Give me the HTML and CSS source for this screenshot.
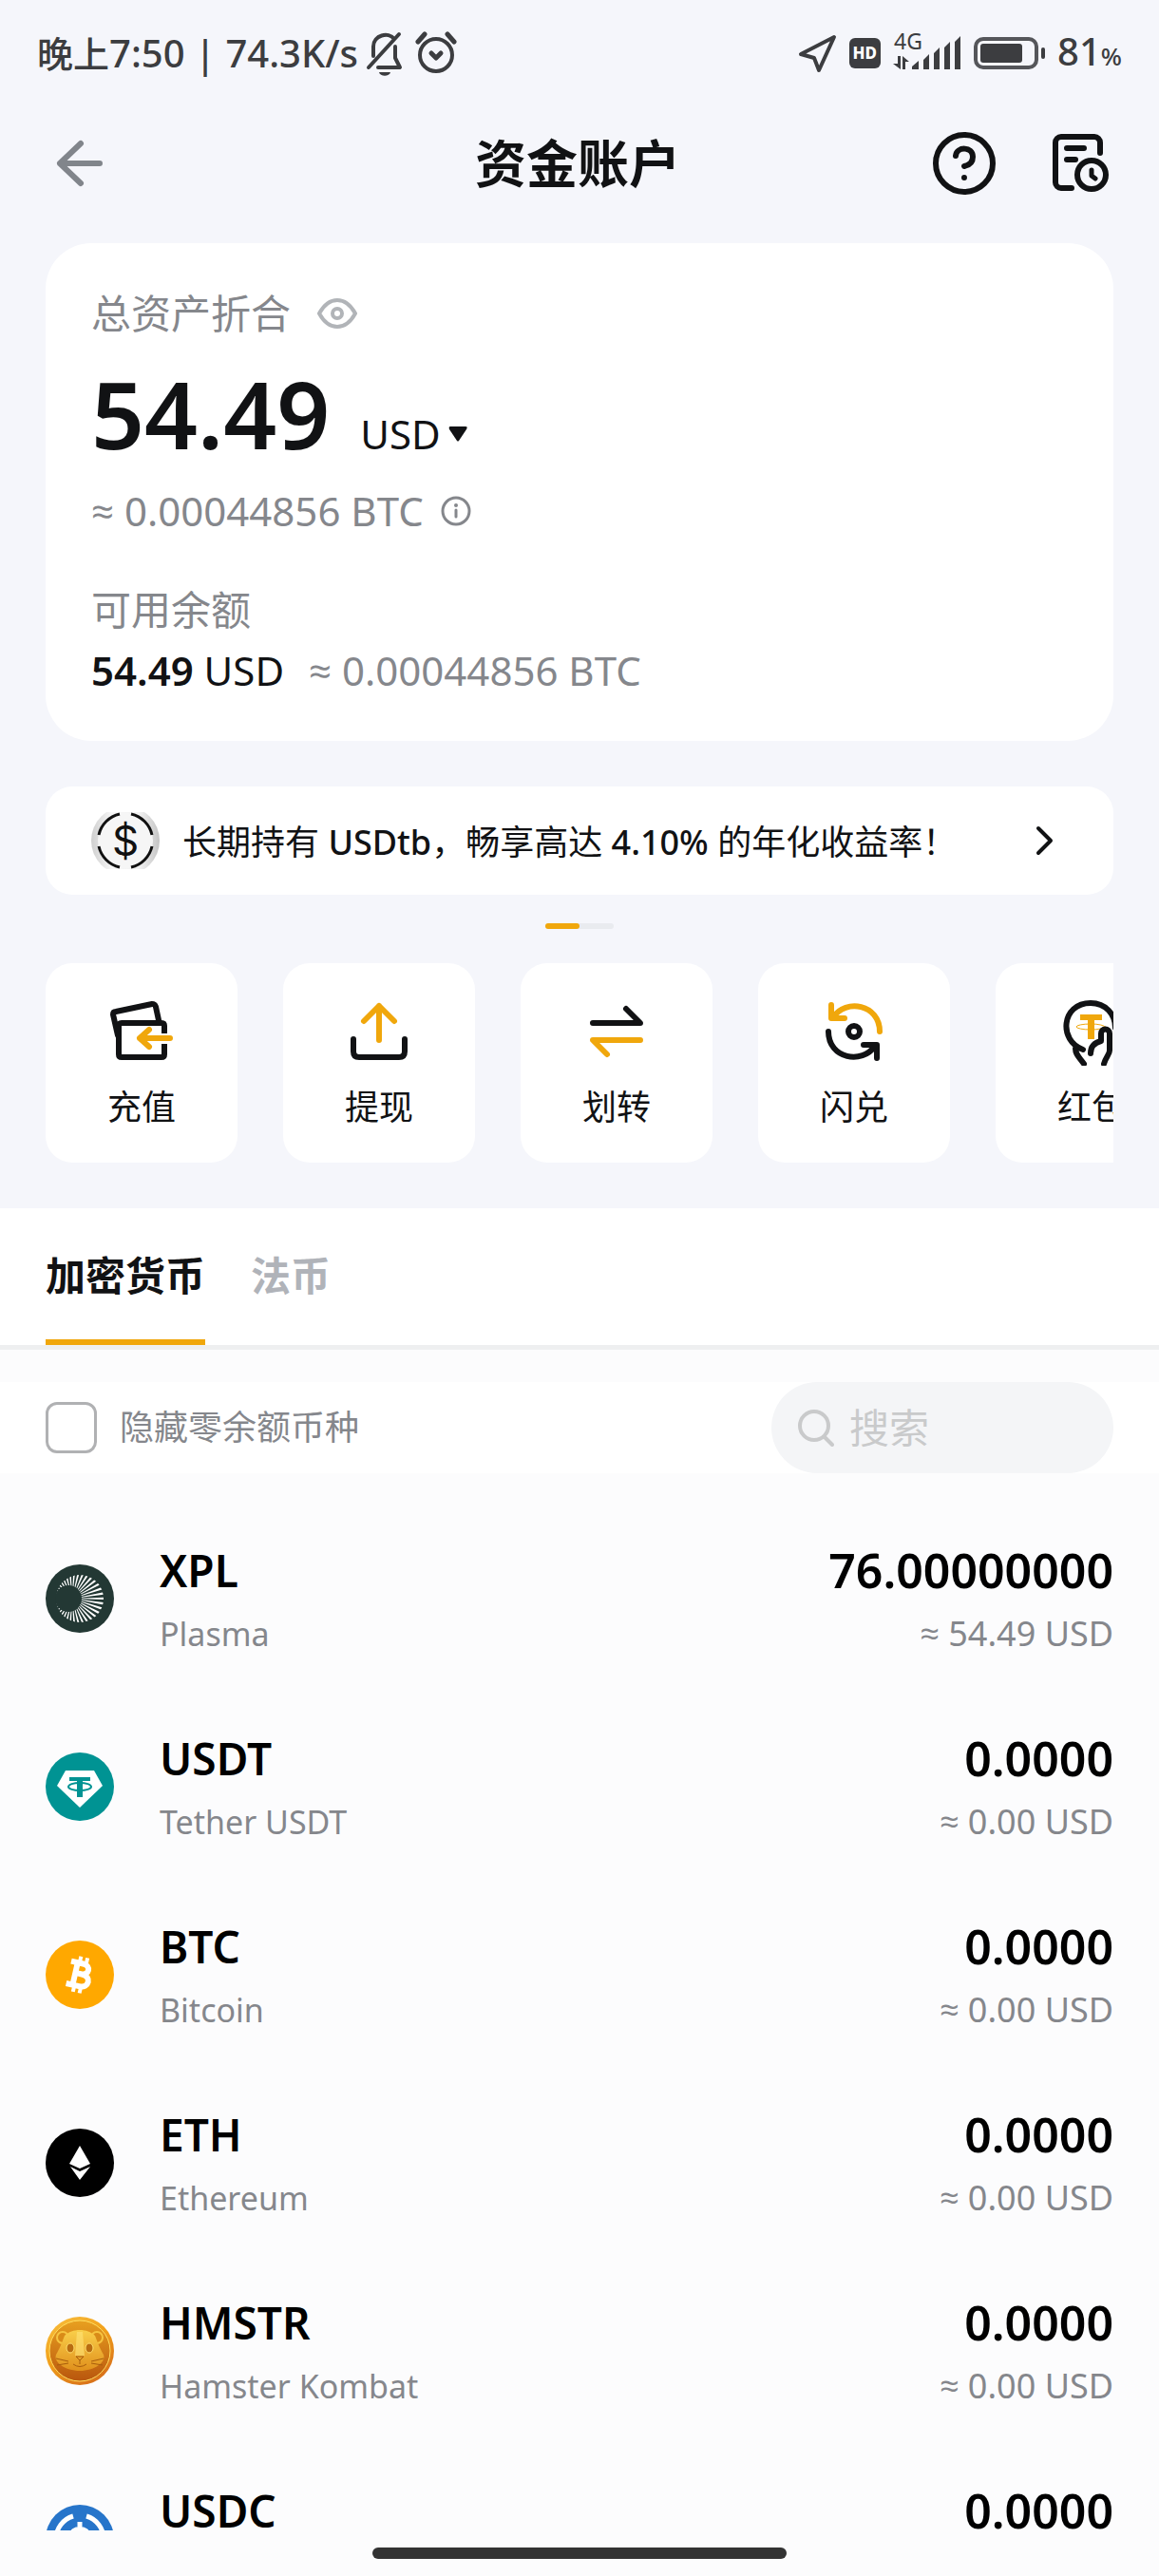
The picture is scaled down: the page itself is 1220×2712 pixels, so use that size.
FILE: index.html
```html
<!DOCTYPE html>
<html lang="zh-CN">
<head>
<meta charset="utf-8">
<meta name="viewport" content="width=device-width, initial-scale=1">
<title>资金账户</title>
<link rel="stylesheet" href="styles.css">
</head>
<body>
<div class="app">
  <div class="status">
    <div class="status-side">
      <span class="status-text"><span class="status-cjk">晚上</span>7:50 | 74.3K/s</span>
      <svg class="status-bell" width="40" height="50" viewBox="0 0 40 50" fill="none" stroke="#3c3d40" stroke-width="4" stroke-linecap="round" stroke-linejoin="round"><path d="M8 28V18C8 6 24 2 30 10M3 40L35 5M31 18v12l5 10H13"/><path d="M14 45h12c-1 5-11 5-12 0z" fill="#3c3d40" stroke="none"/></svg>
      <svg width="44" height="50" viewBox="0 0 44 50" fill="none" stroke="#3c3d40" stroke-width="4" stroke-linecap="round" stroke-linejoin="round"><circle cx="22" cy="27" r="17"/><path d="M3 13l7-8M41 13l-7-8" stroke-width="5"/><path d="M17 25l5 5 5-5" stroke-width="5"/></svg>
    </div>
    <div class="status-side">
      <svg width="42" height="42" viewBox="0 0 42 42" fill="none" stroke="#3c3d40" stroke-width="4" stroke-linejoin="round"><path d="M38 4L3 22l14 4 5 13z"/></svg>
      <span class="status-hd">HD</span>
      <svg class="status-signal" width="74" height="48" viewBox="0 0 74 48" fill="#3c3d40"><text x="2" y="20" font-size="23">4G</text><path d="M6 27h3v14L1 35h5zM11 41V27l7 6h-4v8zM21 41v-3l7-6v9zM33 41V31l6-6v16zM44 41V24l6-6v23zM55 41V18l6-6v29zM66 41V12l6-6v35z"/></svg>
      <svg class="status-battery" width="76" height="34" viewBox="0 0 76 34"><rect x="2" y="2" width="64" height="30" rx="8" fill="none" stroke="#55565a" stroke-width="4"/><rect x="7" y="7" width="44" height="20" rx="3" fill="#3c3d40"/><rect x="71" y="11" width="4" height="12" rx="2" fill="#3c3d40"/></svg>
      <span class="status-text">81<small>%</small></span>
    </div>
  </div>

  <header class="topbar">
    <button class="icon-button" aria-label="返回"><svg width="72" height="66" viewBox="0 0 72 66" fill="none" stroke="#81858b" stroke-width="6" stroke-linecap="round" stroke-linejoin="round"><path d="M57 33H15M37 12L15 33l22 21"/></svg></button>
    <h1>资金账户</h1>
    <div class="topbar-actions">
      <button class="icon-button" aria-label="帮助"><svg width="66" height="66" viewBox="0 0 66 66" fill="none" stroke="#111214" stroke-width="6" stroke-linecap="round"><circle cx="33" cy="33" r="30"/><path d="M24 25C25 15 42 15 42 26c0 6-4 9-9 10"/><circle cx="33" cy="48" r="3" fill="#111214" stroke="none"/></svg></button>
      <button class="icon-button" aria-label="历史记录"><svg width="60" height="62" viewBox="0 0 60 62" fill="none" stroke="#111214" stroke-width="6" stroke-linecap="round" stroke-linejoin="round"><path d="M50 20V9a6 6 0 0 0-6-6H9a6 6 0 0 0-6 6v42a6 6 0 0 0 6 6h11M15 15h18M15 27h9"/><circle cx="41" cy="43" r="15"/><path d="M41 38v6l4 3" stroke-width="5"/></svg></button>
    </div>
  </header>

  <section class="overview">
    <div class="card">
      <div class="card-label">总资产折合
        <button class="icon-button" aria-label="隐藏资产"><svg width="42" height="34" viewBox="0 0 42 34" fill="none" stroke="#b1b4b8" stroke-width="4"><path d="M2 17C7 8 13 3 21 3s14 5 19 14c-5 9-11 14-19 14S7 26 2 17z"/><circle cx="21" cy="17" r="5"/></svg></button>
      </div>
      <div class="total">
        <strong>54.49</strong>
        <button class="currency">USD <svg width="20" height="16" viewBox="0 0 20 16"><path d="M2 0h16c2 0 2 1 1 3l-8 12q-1 1-2 0L1 3Q0 0 2 0z" fill="#111214"/></svg></button>
      </div>
      <div class="approx">≈ 0.00044856 BTC
        <svg width="32" height="32" viewBox="0 0 32 32" fill="none" stroke="#85878c" stroke-width="3" stroke-linecap="round"><circle cx="16" cy="16" r="14"/><path d="M16 15v7"/><circle cx="16" cy="10" r="2" fill="#85878c" stroke="none"/></svg>
      </div>
      <div class="available-label">可用余额</div>
      <div class="available"><span class="available-value"><b>54.49</b> USD</span><span>≈ 0.00044856 BTC</span></div>
    </div>

    <a class="banner" href="#">
      <svg width="72" height="60" viewBox="0 6 72 60"><defs><linearGradient id="silver"><stop stop-color="#cfcfcf"/><stop offset=".3" stop-color="#f7f7f7"/><stop offset=".7" stop-color="#f2f2f2"/><stop offset="1" stop-color="#c4c4c4"/></linearGradient></defs><circle cx="36" cy="36" r="36" fill="url(#silver)"/><circle cx="36" cy="36" r="29" fill="#f6f6f6"/><path d="M42 8a29 29 0 0 1 22 22M64 42a29 29 0 0 1-22 22M30 64A29 29 0 0 1 8 42M8 30A29 29 0 0 1 30 8" fill="none" stroke="#111" stroke-width="3"/><text x="36" y="52" font-size="44" text-anchor="middle" class="coin-text">$</text></svg>
      <span class="banner-text">长期持有 <b>USDtb</b>，畅享高达 <b>4.10%</b> 的年化收益率！</span>
      <svg width="20" height="32" viewBox="0 0 20 32" fill="none" stroke="#111214" stroke-width="4" stroke-linecap="round" stroke-linejoin="round"><path d="M3 3l13 13L3 29"/></svg>
    </a>
    <div class="pager"><i class="on"></i><i></i></div>

    <nav class="tiles">
      <button class="tile"><svg width="72" height="72" viewBox="0 0 72 72" fill="none" stroke="#111214" stroke-width="6" stroke-linecap="round" stroke-linejoin="round"><path d="M11 40L6 18c0-2 1-3 3-3l38-8c2 0 3 0 4 3l3 14"/><path d="M60 38v-8q0-3-3-3H15q-3 0-3 3v30q0 3 3 3h42q3 0 3-3V49" stroke-linecap="butt"/><path d="M66 43H34M44 34l-10 9 10 9" stroke="#f0a70c"/></svg>充值</button>
      <button class="tile"><svg width="72" height="72" viewBox="0 0 72 72" fill="none" stroke="#111214" stroke-width="6" stroke-linecap="round" stroke-linejoin="round"><path d="M9 44v13q0 6 6 6h42q6 0 6-6V44"/><path d="M36 45V9M20 25L36 9l16 16" stroke="#f0a70c"/></svg>提现</button>
      <button class="tile"><svg width="72" height="72" viewBox="0 0 72 72" fill="none" stroke="#111214" stroke-width="6" stroke-linecap="round" stroke-linejoin="round"><path d="M11 27h50L46 12"/><path d="M61 45H11l15 15" stroke="#f0a70c"/></svg>划转</button>
      <button class="tile"><svg width="72" height="72" viewBox="0 0 72 72" fill="none" stroke="#111214" stroke-width="6" stroke-linecap="round" stroke-linejoin="round"><circle cx="36" cy="36" r="6"/><path d="M9 36c0 29 36 35 49 15M46 50h14v14"/><path d="M63 36C63 7 27 1 14 21M26 22H12V8" stroke="#f0a70c"/></svg>闪兑</button>
      <button class="tile"><svg width="72" height="72" viewBox="0 0 72 72" fill="none" stroke="#111214" stroke-width="6" stroke-linecap="round" stroke-linejoin="round"><path d="M27 55C1 46 4 6 35 6c16 0 26 12 26 26M19 54c0 6 4 9 9 16"/><path d="M24 18h23v6h-8v20h-7V24h-8z" fill="#f0a70c" stroke="none"/><ellipse cx="35" cy="31" rx="15" ry="3" stroke="#f0a70c" stroke-width="1"/><path d="M35 59c0-6 3-11 11-13V38c0-6 9-6 9 0v18c0 4-4 7-6 14"/></svg>红包</button>
    </nav>
  </section>

  <div class="tabs" role="tablist">
    <button class="tab active" role="tab" aria-selected="true">加密货币</button>
    <button class="tab" role="tab" aria-selected="false">法币</button>
  </div>

  <div class="filter">
    <label class="check"><input type="checkbox">隐藏零余额币种</label>
    <label class="search"><svg width="38" height="40" viewBox="0 0 38 40" fill="none" stroke="#c9cacb" stroke-width="4" stroke-linecap="round"><circle cx="17" cy="18" r="15"/><path d="M28 30l8 8"/></svg><input type="text" placeholder="搜索" aria-label="搜索"></label>
  </div>

  <ul class="coins">
    <li>
      <svg width="72" height="72" viewBox="0 0 72 72"><defs><clipPath id="rays"><circle cx="36" cy="36" r="25"/></clipPath></defs><circle cx="36" cy="36" r="36" fill="#233834"/><circle cx="28" cy="36" r="20" fill="none" stroke="#fff" stroke-width="40" pathLength="76" stroke-dasharray=".9 1.1" stroke-dashoffset=".5" clip-path="url(#rays)"/><circle cx="24" cy="36" r="14" fill="#233834"/></svg>
      <div class="coin"><b>XPL</b><span>Plasma</span></div>
      <div class="amount"><b>76.00000000</b><span>≈ 54.49 USD</span></div>
    </li>
    <li>
      <svg width="72" height="72" viewBox="0 0 72 72"><circle cx="36" cy="36" r="36" fill="#009393"/><path d="M21 19h30l9 16-24 23-24-23z" fill="#fff"/><path d="M25 26h22v4h-8v17h-6V30h-8z" fill="#009393"/><ellipse cx="36" cy="36" rx="12" ry="4" fill="none" stroke="#009393" stroke-width="2"/></svg>
      <div class="coin"><b>USDT</b><span>Tether USDT</span></div>
      <div class="amount"><b>0.0000</b><span>≈ 0.00 USD</span></div>
    </li>
    <li>
      <svg width="72" height="72" viewBox="0 0 72 72"><circle cx="36" cy="36" r="36" fill="#ffa800"/><g transform="rotate(13 36 36)" fill="none" stroke="#fff" stroke-width="6"><path d="M24 24h13c9 0 9 11 0 11h-7 8c11 0 11 13 0 13H24M31 24v24"/><path d="M33 17v6M40 17v7M33 49v6M40 48v7" stroke-width="4"/></g></svg>
      <div class="coin"><b>BTC</b><span>Bitcoin</span></div>
      <div class="amount"><b>0.0000</b><span>≈ 0.00 USD</span></div>
    </li>
    <li>
      <svg width="72" height="72" viewBox="0 0 72 72"><circle cx="36" cy="36" r="36" fill="#000"/><path d="M36 18l11 19-11 5-11-5zM26 40l10 5 11-5-11 14z" fill="#fff"/></svg>
      <div class="coin"><b>ETH</b><span>Ethereum</span></div>
      <div class="amount"><b>0.0000</b><span>≈ 0.00 USD</span></div>
    </li>
    <li>
      <svg width="72" height="72" viewBox="0 0 72 72"><defs><linearGradient id="rim" x2=".6" y2="1"><stop stop-color="#f8c040"/><stop offset=".5" stop-color="#f2a21c"/><stop offset="1" stop-color="#d9731a"/></linearGradient><linearGradient id="well" x2="0" y2="1"><stop stop-color="#e8a020"/><stop offset="1" stop-color="#b9560d"/></linearGradient><linearGradient id="fur" x2="0" y2="1"><stop stop-color="#f9cf4a"/><stop offset="1" stop-color="#e0901c"/></linearGradient></defs><circle cx="36" cy="36" r="36" fill="url(#rim)"/><circle cx="36" cy="36" r="32" fill="url(#well)" stroke="#ffdf62" stroke-width="1"/><circle cx="18" cy="22" r="6" fill="#d98b18" stroke="#f6c440" stroke-width="2"/><circle cx="54" cy="22" r="6" fill="#d98b18" stroke="#f6c440" stroke-width="2"/><path d="M20 20C28 12 44 12 52 20c3 8 5 13 9 20 3 8-10 17-25 17S8 48 11 40c4-7 6-12 9-20z" fill="url(#fur)"/><path d="M33 16h6l2 25H31z" fill="#ffe478" opacity=".6"/><ellipse cx="26" cy="33" rx="4" ry="5" fill="#b96d10" stroke="#ffe070"/><ellipse cx="46" cy="33" rx="4" ry="5" fill="#b96d10" stroke="#ffe070"/><path d="M32 42h8l-4 4zM36 46v4M29 50q7 5 14 0M11 44l13 3M12 51l12-2M61 44l-13 3M60 51l-12-2" fill="none" stroke="#a75c0c"/></svg>
      <div class="coin"><b>HMSTR</b><span>Hamster Kombat</span></div>
      <div class="amount"><b>0.0000</b><span>≈ 0.00 USD</span></div>
    </li>
    <li>
      <svg width="72" height="72" viewBox="0 0 72 72"><circle cx="36" cy="36" r="36" fill="#2775ca"/><path d="M29 12a25 25 0 0 0 0 48M43 12a25 25 0 0 1 0 48" fill="none" stroke="#fff" stroke-width="5"/><path d="M36 18v7M36 47v7M45 33c0-10-18-10-18 0 0 6 18 2 18 9 0 8-18 8-18 0" fill="none" stroke="#fff" stroke-width="5"/></svg>
      <div class="coin"><b>USDC</b></div>
      <div class="amount"><b>0.0000</b></div>
    </li>
  </ul>
  <footer class="home"><div class="home-bar"></div></footer>
</div>
</body>
</html>
```
FILE: styles.css
```css
* { box-sizing: border-box; }
body, h1, ul { margin: 0; padding: 0; }
body, button, input { font-family: "Noto Sans", "Open Sans", "Noto Sans CJK SC", sans-serif; color: #111214; }
button { border: 0; padding: 0; background: none; }
svg { display: block; flex: none; }

.app { display: flex; flex-direction: column; height: 100vh; overflow: hidden; background: #fcfcfd; }

/* status bar */
.status { flex: none; display: flex; justify-content: space-between; align-items: center; height: 112px; padding: 0 39px; background: #f5f6fb; color: #3c3d40; }
.status-side { display: flex; align-items: center; gap: 12px; }
.status-text { font-size: 40px; font-weight: 500; line-height: 56px; white-space: nowrap; }
.status-cjk { font-size: 38px; }
.status-text small { font-size: 26px; }
.status-hd { padding: 0 4px; border-radius: 6px; background: #3c3d40; color: #fff; font: 800 17px/32px "Noto Sans", sans-serif; }
.status-signal { overflow: visible; font-family: "Noto Sans", sans-serif; }
.status-bell { margin-left: -4px; }

/* title bar */
.topbar { flex: none; display: grid; grid-template-columns: 1fr auto 1fr; align-items: center; height: 120px; padding: 0 52px 0 48px; background: #f5f6fb; }
.topbar h1 { font-size: 54px; font-weight: 600; line-height: 72px; }
.topbar-actions { display: flex; align-items: center; justify-content: flex-end; gap: 60px; }
.icon-button { display: block; width: max-content; }

/* overview */
.overview { flex: none; padding: 24px 48px 48px; background: #f5f6fb; }
.card { padding: 44px 48px; border-radius: 48px; background: #fff; color: #85878c; font-size: 42px; line-height: 60px; }
.card-label, .approx { display: flex; align-items: center; }
.card-label { gap: 28px; }
.approx { gap: 18px; margin-top: 22px; }
.total { display: flex; align-items: baseline; gap: 32px; height: 102px; margin-top: 24px; line-height: 102px; color: #111214; }
.total strong { font-size: 98px; font-weight: 600; }
.currency { display: flex; align-items: center; gap: 8px; font-size: 42px; line-height: 60px; }
.available-label { margin-top: 44px; }
.available { display: flex; gap: 26px; margin-top: 4px; }
.available-value { color: #111214; }
.available b { font-weight: 600; }

.banner { display: flex; align-items: center; gap: 24px; height: 114px; margin-top: 48px; padding: 0 62px 0 48px; border-radius: 28px; background: #fff; color: #111214; text-decoration: none; font-size: 36px; line-height: 54px; }
.banner-text { flex: 1; padding-top: 4px; white-space: nowrap; }
.banner b { font-weight: 500; }
.coin-text { font-family: "Inter", sans-serif; fill: #111; }

.pager { display: flex; width: 72px; height: 6px; margin: 30px auto 36px; border-radius: 3px; background: #e9ebef; }
.pager i { flex: 1; border-radius: 3px; }
.pager .on { background: #f0a70c; }

.tiles { display: flex; gap: 48px; overflow: hidden; }
.tile { flex: none; display: flex; flex-direction: column; align-items: center; gap: 18px; width: 202px; height: 210px; padding-top: 36px; border-radius: 28px; background: #fff; font-size: 36px; line-height: 52px; }

/* tabs */
.tabs { flex: none; display: flex; gap: 48px; padding: 0 48px; border-bottom: 5px solid #eeeff0; background: #fff; }
.tab { height: 144px; padding-top: 4px; border-bottom: 6px solid transparent; color: #b0b3b9; font-size: 42px; font-weight: 600; line-height: 60px; }
.tab.active { border-color: #f0a70c; color: #111214; }

/* filter row */
.filter { flex: none; display: flex; align-items: center; justify-content: space-between; height: 96px; margin-top: 34px; padding: 0 48px; background: #fff; }
.check { display: flex; align-items: center; gap: 24px; color: #85878c; font-size: 36px; line-height: 54px; }
.check input { appearance: none; width: 54px; height: 54px; margin: 0; border: 3px solid #b0b1b3; border-radius: 12px; background: #fff; }
.search { display: flex; align-items: center; gap: 16px; width: 360px; height: 96px; padding: 0 28px; border-radius: 48px; background: #f4f5f7; }
.search input { flex: 1; min-width: 0; padding: 0; border: 0; outline: 0; background: none; font-size: 42px; line-height: 60px; }
.search input::placeholder { color: #c9cacb; opacity: 1; }

/* coin list */
.coins { flex: 1; min-height: 0; overflow: hidden; padding-top: 33px; list-style: none; }
.coins li { display: flex; align-items: center; gap: 48px; height: 198px; padding: 0 48px; }
.coin, .amount { display: flex; flex-direction: column; gap: 8px; height: 126px; }
.coin { flex: 1; }
.amount { text-align: right; }
.coins b { color: #000; font-weight: 600; line-height: 66px; }
.coins span { color: #85878c; line-height: 52px; }
.coin b { font-size: 46px; }
.coin span { font-size: 34px; }
.amount b { font-size: 50px; }
.amount span { font-size: 36px; }

.home { flex: none; display: flex; justify-content: center; height: 48px; padding-top: 18px; }
.home-bar { width: 436px; height: 12px; border-radius: 6px; background: #333; }
```
